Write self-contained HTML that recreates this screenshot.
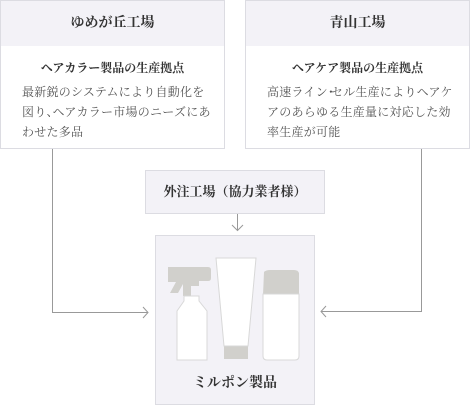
<!DOCTYPE html>
<html><head><meta charset="utf-8"><style>
*{margin:0;padding:0;box-sizing:border-box}
body{width:470px;height:405px;background:#fff;position:relative;overflow:hidden;font-family:"Liberation Serif","Noto Serif CJK SC",serif;color:#333}
.box{position:absolute;top:0;width:225px;height:149px;border:1px solid #dcdce2;background:#fff}
.hd{height:45px;background:#f3f2f7;text-align:center;font-weight:bold;font-size:14px;line-height:45px;color:#333}
.st{text-align:center;font-weight:bold;font-size:12px;margin-top:14px;line-height:16px}
.tx{font-size:12px;line-height:20px;color:#555;padding:0 0 0 21px;margin-top:6px;white-space:nowrap;letter-spacing:0.25px}
</style></head><body>
<div class="box" style="left:0"><div class="hd">ゆめが丘工場</div><div class="st">ヘアカラー製品の生産拠点</div><div class="tx">最新鋭のシステムにより自動化を<br>図り<span style="letter-spacing:-6px">、</span>ヘアカラー市場のニーズにあ<br>わせた多品</div></div>
<div class="box" style="left:245px"><div class="hd">青山工場</div><div class="st">ヘアケア製品の生産拠点</div><div class="tx">高速ライン<span style="letter-spacing:-6px;margin-left:-3px">・</span>セル生産によりヘアケ<br>アのあらゆる生産量に対応した効<br>率生産が可能</div></div>
<div style="position:absolute;left:145px;top:170px;width:180px;height:44px;background:#f3f2f7;border:1px solid #dcdce2;text-align:center;line-height:42px;font-size:13px;font-weight:bold">外注工場（協力業者様）</div>
<div style="position:absolute;left:155px;top:235px;width:160px;height:170px;background:#f3f2f7;border:1px solid #dcdce2"></div>
<svg width="470" height="405" style="position:absolute;left:0;top:0">
<g stroke="#999" fill="none" stroke-width="1">
<path d="M52.5 149V312.5H148M143 307l5 5.5-5 5.5"/>
<path d="M421.5 149V311.5H321M326 306l-5 5.5 5 5.5"/>
<path d="M237.5 214V230M232 225l5.5 5.5 5.5-5.5"/>
</g>
<g fill="#d1d0cc">
<path d="M168 267h40q3 0 3 3v8q0 3-3 3h-9v5h-8v10h-8v-12l-5 9h-8l6-11h-8z"/>
<path d="M224 346h24v13h-24z"/>
<path d="M264 272q2-2 6-2h24q4 0 5 3v22h-36z"/>
</g>
<g fill="#fff" stroke="#d8d8d8">
<path d="M184 296h15v5l8 10v49h-30v-49l7-10z"/>
<path d="M216 258h40l-8 88h-24z"/>
<path d="M263 294h36v62q0 4-4 4h-28q-4 0-4-4z"/>
</g>
</svg>
<div style="position:absolute;left:155px;top:372px;width:160px;text-align:center;font-size:14px;font-weight:bold">ミルポン製品</div>
</body></html>
